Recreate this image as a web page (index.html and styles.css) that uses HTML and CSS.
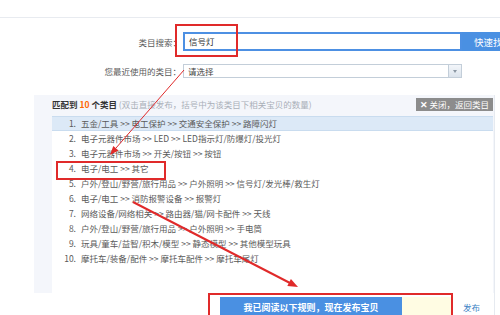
FILE: index.html
```html
<!DOCTYPE html>
<html lang="zh-CN">
<head>
<meta charset="utf-8">
<title>类目搜索</title>
<link rel="stylesheet" href="styles.css">
</head>
<body>
<div class="topbar"></div>
<div class="form">
  <div class="row row-search">
    <label class="lbl">类目搜索：</label>
    <div class="search-input">信号灯</div>
    <button class="search-btn">快速找到</button>
  </div>
  <div class="row row-recent">
    <label class="lbl">您最近使用的类目：</label>
    <div class="select"><span class="select-text">请选择</span><span class="select-arrow"></span></div>
  </div>
</div>
<div class="panel">
  <div class="panel-head">
    <div class="match"><b>匹配到 <em>10</em> 个类目</b> <span class="hint">(双击直接发布，括号中为该类目下相关宝贝的数量)</span></div>
    <button class="close"><span class="x">✕</span> 关闭，返回类目</button>
  </div>
  <ul class="list">
    <li class="active"><span class="n">1.</span>五金/工具 &gt;&gt; 电工保护 &gt;&gt; 交通安全保护 &gt;&gt; 路障闪灯</li>
    <li><span class="n">2.</span>电子元器件市场 &gt;&gt; LED &gt;&gt; LED指示灯/防爆灯/投光灯</li>
    <li><span class="n">3.</span>电子元器件市场 &gt;&gt; 开关/按钮 &gt;&gt; 按钮</li>
    <li><span class="n">4.</span>电子/电工 &gt;&gt; 其它</li>
    <li><span class="n">5.</span>户外/登山/野营/旅行用品 &gt;&gt; 户外照明 &gt;&gt; 信号灯/发光棒/救生灯</li>
    <li><span class="n">6.</span>电子/电工 &gt;&gt; 消防报警设备 &gt;&gt; 报警灯</li>
    <li><span class="n">7.</span>网络设备/网络相关 &gt;&gt; 路由器/猫/网卡配件 &gt;&gt; 天线</li>
    <li><span class="n">8.</span>户外/登山/野营/旅行用品 &gt;&gt; 户外照明 &gt;&gt; 手电筒</li>
    <li><span class="n">9.</span>玩具/童车/益智/积木/模型 &gt;&gt; 静态模型 &gt;&gt; 其他模型玩具</li>
    <li><span class="n">10.</span>摩托车/装备/配件 &gt;&gt; 摩托车配件 &gt;&gt; 摩托车尾灯</li>
  </ul>
</div>
<div class="actions">
  <button class="publish">我已阅读以下规则，现在发布宝贝</button>
  <div class="tip"></div>
  <a class="link">发布</a>
</div>
<svg class="annot" width="500" height="315" viewBox="0 0 500 315">
  <rect x="176" y="25" width="61" height="31" fill="none" stroke="#e02a2a" stroke-width="2"/>
  <rect x="57" y="162" width="108" height="17" fill="none" stroke="#e02a2a" stroke-width="2"/>
  <rect x="209" y="294" width="243" height="30" fill="none" stroke="#e02a2a" stroke-width="2"/>
  <line x1="184" y1="70" x2="116" y2="148" stroke="#e02a2a" stroke-width="1"/>
  <polygon points="110,155 118.5,150.5 113.3,146" fill="#e02a2a"/>
  <line x1="133" y1="202" x2="290" y2="283" stroke="#e02a2a" stroke-width="2"/>
  <polygon points="298,287 287.3,286 290.9,278.9" fill="#e02a2a"/>
</svg>
</body>
</html>
```
FILE: styles.css
```css
html, body {
  margin: 0;
  padding: 0;
}
body {
  width: 500px;
  height: 315px;
  overflow: hidden;
  position: relative;
  background: #fff;
  font-family: "Noto Sans CJK SC", "Liberation Sans", sans-serif;
  font-size: 8.5px;
  color: #555;
}
.topbar {
  height: 17px;
  border-bottom: 1px solid #e8ebf0;
}
.form {
  padding-top: 14px;
}
.row {
  display: flex;
  align-items: center;
}
.lbl {
  width: 183px;
  box-sizing: border-box;
  padding-right: 2px;
  text-align: right;
  color: #5a5a5a;
  flex: none;
}
.search-input {
  flex: none;
  width: 279px;
  height: 19px;
  box-sizing: border-box;
  border: 2px solid #4d90e3;
  padding-left: 4px;
  line-height: 15px;
  color: #333;
  background: #fff;
}
.search-btn {
  flex: none;
  width: 60px;
  height: 19px;
  border: none;
  margin: 0;
  padding: 0 0 0 12px;
  text-align: left;
  background: #4a90e2;
  color: #fff;
  font: inherit;
  font-size: 9.5px;
  white-space: nowrap;
}
.row-recent {
  margin-top: 13px;
}
.select {
  flex: none;
  width: 279px;
  height: 14px;
  box-sizing: border-box;
  border: 1px solid #c3ced9;
  display: flex;
  background: #fff;
}
.select-text {
  flex: 1;
  padding-left: 4px;
  line-height: 12px;
  color: #444;
}
.select-arrow {
  width: 12px;
  border-left: 1px solid #c3ced9;
  background: linear-gradient(#f3f6fa, #dbe3ec);
  position: relative;
}
.select-arrow::after {
  content: "";
  position: absolute;
  left: 4px;
  top: 5px;
  border-left: 2.5px solid transparent;
  border-right: 2.5px solid transparent;
  border-top: 3px solid #8a96a3;
}
.panel {
  margin: 17px 0 0 34px;
  width: 461px;
  box-sizing: border-box;
  background: #f4f6fb;
  border-right: 1px solid #e6eaf0;
  padding: 0 1px 0 18px;
}
.panel-head {
  height: 21px;
  display: flex;
  justify-content: space-between;
  align-items: flex-start;
}
.match {
  padding-top: 3px;
  line-height: 12px;
  color: #333;
}
.match b {
  font-weight: bold;
}
.match em {
  font-style: normal;
  color: #f60;
}
.hint {
  color: #a9afb8;
}
.close {
  margin: 3px 0 0;
  height: 13px;
  border: none;
  padding: 0 4px;
  background: #8c8c8c;
  color: #fff;
  font: inherit;
  line-height: 13px;
}
.close .x {
  font-weight: bold;
}
.list {
  margin: 0;
  padding: 0;
  list-style: none;
  background: #fff;
  height: 177px;
}
.list li {
  display: flex;
  height: 15px;
  line-height: 15px;
  color: #5a5a5a;
  white-space: nowrap;
}
.list li.active {
  background: #dce9f7;
  box-shadow: inset 0 1px 0 #c9dcef, inset 0 -1px 0 #c9dcef;
}
.n {
  width: 24px;
  padding-right: 5px;
  text-align: right;
  flex: none;
}
.actions {
  margin-left: 34px;
  width: 461px;
  height: 22px;
  box-sizing: border-box;
  border-right: 1px solid #e6eaf0;
  padding: 4px 0 0 186px;
  display: flex;
}
.publish {
  flex: none;
  width: 182px;
  height: 20px;
  border: none;
  margin: 0;
  padding: 0;
  background: #4a90e2;
  color: #fff;
  font: inherit;
  font-size: 9px;
  font-weight: bold;
}
.tip {
  flex: none;
  width: 51px;
  height: 20px;
  background: #fffce3;
}
.link {
  margin-left: 10px;
  line-height: 20px;
  color: #3b7fc4;
}
.annot {
  position: absolute;
  left: 0;
  top: 0;
  pointer-events: none;
}
```
